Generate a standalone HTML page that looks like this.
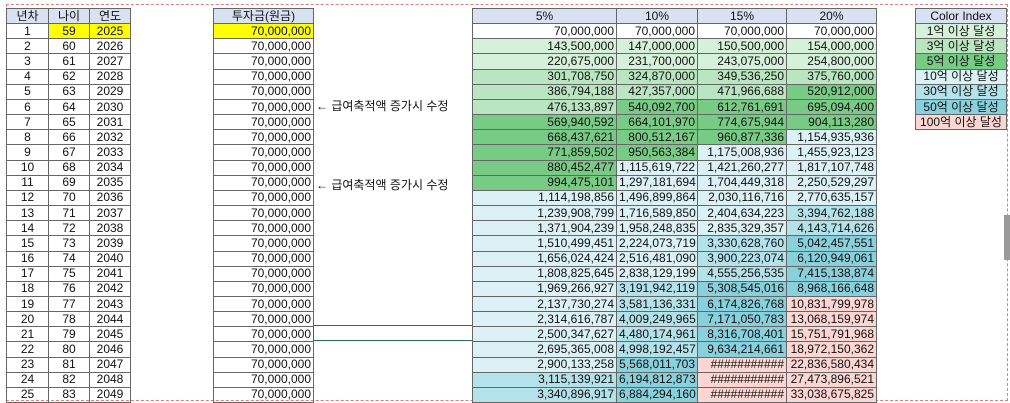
<!DOCTYPE html>
<html><head><meta charset="utf-8"><style>
body{margin:0;width:1010px;height:402px;overflow:hidden;background:#fff;position:relative;font-family:"Liberation Sans","Noto Sans CJK KR",sans-serif;font-size:12px;color:#111}
table{position:absolute;border-collapse:collapse;table-layout:fixed;top:8px}
td{border:1px solid #666;height:14.17px;padding:0 2px;line-height:13px;white-space:nowrap;overflow:hidden}
.c td{text-align:center}
.r td{text-align:right}
.h td{background:#d9e2f3;text-align:center}
.y{background:#ffff00}
.g1{background:#d6f1d9}.g2{background:#b9e6c0}.g3{background:#78cb84}
.b1{background:#dbf1f5}.b2{background:#b3e2ea}.b3{background:#88d0dc}.p{background:#fbd6d2}
.note{position:absolute;left:316px;font-size:12px}
</style></head><body>
<div style="position:absolute;left:6px;top:4px;width:1000px;height:395px;border:1px dashed #d9827a"></div>
<div style="position:absolute;left:1004px;top:215px;width:6px;height:45px;background:#9a9a9a"></div>

<table class="c" style="left:6px;width:125px">
<col style="width:42px"><col style="width:41px"><col style="width:41px">
<tr class="h"><td>년차</td><td>나이</td><td>연도</td></tr>
<tr><td>1</td><td class="y">59</td><td class="y">2025</td></tr>
<tr><td>2</td><td>60</td><td>2026</td></tr><tr><td>3</td><td>61</td><td>2027</td></tr>
<tr><td>4</td><td>62</td><td>2028</td></tr><tr><td>5</td><td>63</td><td>2029</td></tr>
<tr><td>6</td><td>64</td><td>2030</td></tr><tr><td>7</td><td>65</td><td>2031</td></tr>
<tr><td>8</td><td>66</td><td>2032</td></tr><tr><td>9</td><td>67</td><td>2033</td></tr>
<tr><td>10</td><td>68</td><td>2034</td></tr><tr><td>11</td><td>69</td><td>2035</td></tr>
<tr><td>12</td><td>70</td><td>2036</td></tr><tr><td>13</td><td>71</td><td>2037</td></tr>
<tr><td>14</td><td>72</td><td>2038</td></tr><tr><td>15</td><td>73</td><td>2039</td></tr>
<tr><td>16</td><td>74</td><td>2040</td></tr><tr><td>17</td><td>75</td><td>2041</td></tr>
<tr><td>18</td><td>76</td><td>2042</td></tr><tr><td>19</td><td>77</td><td>2043</td></tr>
<tr><td>20</td><td>78</td><td>2044</td></tr><tr><td>21</td><td>79</td><td>2045</td></tr>
<tr><td>22</td><td>80</td><td>2046</td></tr><tr><td>23</td><td>81</td><td>2047</td></tr>
<tr><td>24</td><td>82</td><td>2048</td></tr><tr><td>25</td><td>83</td><td>2049</td></tr>
</table>

<table class="r" style="left:213px;width:101px">
<col style="width:100px">
<tr class="h"><td>투자금(원금)</td></tr>
<tr><td class="y">70,000,000</td></tr>
<tr><td>70,000,000</td></tr><tr><td>70,000,000</td></tr><tr><td>70,000,000</td></tr><tr><td>70,000,000</td></tr>
<tr><td>70,000,000</td></tr><tr><td>70,000,000</td></tr><tr><td>70,000,000</td></tr><tr><td>70,000,000</td></tr>
<tr><td>70,000,000</td></tr><tr><td>70,000,000</td></tr><tr><td>70,000,000</td></tr><tr><td>70,000,000</td></tr>
<tr><td>70,000,000</td></tr><tr><td>70,000,000</td></tr><tr><td>70,000,000</td></tr><tr><td>70,000,000</td></tr>
<tr><td>70,000,000</td></tr><tr><td>70,000,000</td></tr><tr><td>70,000,000</td></tr><tr><td>70,000,000</td></tr>
<tr><td>70,000,000</td></tr><tr><td>70,000,000</td></tr><tr><td>70,000,000</td></tr><tr><td>70,000,000</td></tr>
</table>
<div class="note" style="top:97px">← 급여축적액 증가시 수정</div>
<div class="note" style="top:176px">← 급여축적액 증가시 수정</div>
<div style="position:absolute;left:313px;top:325px;width:158px;height:14px;border:1px solid #217346"></div>

<table class="r" style="left:472px;width:405px">
<col style="width:144px"><col style="width:81px"><col style="width:89px"><col style="width:90px">
<tr class="h"><td>5%</td><td>10%</td><td>15%</td><td>20%</td></tr>
<tr><td>70,000,000</td><td>70,000,000</td><td>70,000,000</td><td>70,000,000</td></tr>
<tr><td class="g1">143,500,000</td><td class="g1">147,000,000</td><td class="g1">150,500,000</td><td class="g1">154,000,000</td></tr>
<tr><td class="g1">220,675,000</td><td class="g1">231,700,000</td><td class="g1">243,075,000</td><td class="g1">254,800,000</td></tr>
<tr><td class="g2">301,708,750</td><td class="g2">324,870,000</td><td class="g2">349,536,250</td><td class="g2">375,760,000</td></tr>
<tr><td class="g2">386,794,188</td><td class="g2">427,357,000</td><td class="g2">471,966,688</td><td class="g3">520,912,000</td></tr>
<tr><td class="g2">476,133,897</td><td class="g3">540,092,700</td><td class="g3">612,761,691</td><td class="g3">695,094,400</td></tr>
<tr><td class="g3">569,940,592</td><td class="g3">664,101,970</td><td class="g3">774,675,944</td><td class="g3">904,113,280</td></tr>
<tr><td class="g3">668,437,621</td><td class="g3">800,512,167</td><td class="g3">960,877,336</td><td class="b1">1,154,935,936</td></tr>
<tr><td class="g3">771,859,502</td><td class="g3">950,563,384</td><td class="b1">1,175,008,936</td><td class="b1">1,455,923,123</td></tr>
<tr><td class="g3">880,452,477</td><td class="b1">1,115,619,722</td><td class="b1">1,421,260,277</td><td class="b1">1,817,107,748</td></tr>
<tr><td class="g3">994,475,101</td><td class="b1">1,297,181,694</td><td class="b1">1,704,449,318</td><td class="b1">2,250,529,297</td></tr>
<tr><td class="b1">1,114,198,856</td><td class="b1">1,496,899,864</td><td class="b1">2,030,116,716</td><td class="b1">2,770,635,157</td></tr>
<tr><td class="b1">1,239,908,799</td><td class="b1">1,716,589,850</td><td class="b1">2,404,634,223</td><td class="b2">3,394,762,188</td></tr>
<tr><td class="b1">1,371,904,239</td><td class="b1">1,958,248,835</td><td class="b1">2,835,329,357</td><td class="b2">4,143,714,626</td></tr>
<tr><td class="b1">1,510,499,451</td><td class="b1">2,224,073,719</td><td class="b2">3,330,628,760</td><td class="b3">5,042,457,551</td></tr>
<tr><td class="b1">1,656,024,424</td><td class="b1">2,516,481,090</td><td class="b2">3,900,223,074</td><td class="b3">6,120,949,061</td></tr>
<tr><td class="b1">1,808,825,645</td><td class="b1">2,838,129,199</td><td class="b2">4,555,256,535</td><td class="b3">7,415,138,874</td></tr>
<tr><td class="b1">1,969,266,927</td><td class="b2">3,191,942,119</td><td class="b3">5,308,545,016</td><td class="b3">8,968,166,648</td></tr>
<tr><td class="b1">2,137,730,274</td><td class="b2">3,581,136,331</td><td class="b3">6,174,826,768</td><td class="p">10,831,799,978</td></tr>
<tr><td class="b1">2,314,616,787</td><td class="b2">4,009,249,965</td><td class="b3">7,171,050,783</td><td class="p">13,068,159,974</td></tr>
<tr><td class="b1">2,500,347,627</td><td class="b2">4,480,174,961</td><td class="b3">8,316,708,401</td><td class="p">15,751,791,968</td></tr>
<tr><td class="b1">2,695,365,008</td><td class="b2">4,998,192,457</td><td class="b3">9,634,214,661</td><td class="p">18,972,150,362</td></tr>
<tr><td class="b1">2,900,133,258</td><td class="b3">5,568,011,703</td><td class="p">###########</td><td class="p">22,836,580,434</td></tr>
<tr><td class="b2">3,115,139,921</td><td class="b3">6,194,812,873</td><td class="p">###########</td><td class="p">27,473,896,521</td></tr>
<tr><td class="b2">3,340,896,917</td><td class="b3">6,884,294,160</td><td class="p">###########</td><td class="p">33,038,675,825</td></tr>
</table>

<table class="c" style="left:915px;width:92px">
<col style="width:91px">
<tr class="h"><td>Color Index</td></tr>
<tr><td class="g1">1억 이상 달성</td></tr>
<tr><td class="g2">3억 이상 달성</td></tr>
<tr><td class="g3">5억 이상 달성</td></tr>
<tr><td class="b1">10억 이상 달성</td></tr>
<tr><td class="b2">30억 이상 달성</td></tr>
<tr><td class="b3">50억 이상 달성</td></tr>
<tr><td class="p">100억 이상 달성</td></tr>
</table>
</body></html>
